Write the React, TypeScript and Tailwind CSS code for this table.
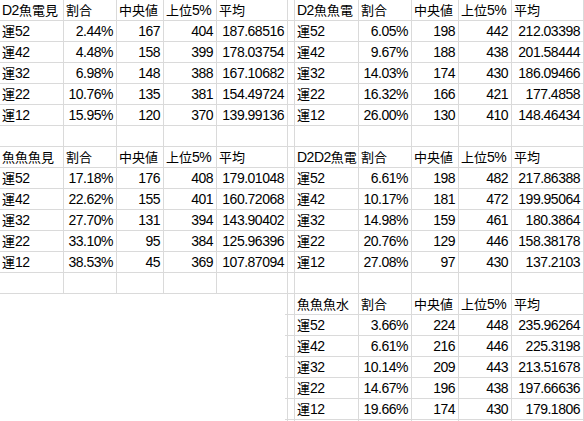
import React from "react";

const LEFT_W = ["w-[64px]", "w-[53px]", "w-[47px]", "w-[53px]", "w-[71px]"];
const RIGHT_W = ["w-[64px]", "w-[53px]", "w-[47px]", "w-[53px]", "w-[72px]"];

type Block = { kind: "header" | "data" | "empty" | "blank"; cells?: string[] };

const H = (name: string): Block => ({ kind: "header", cells: [name, "割合", "中央値", "上位5%", "平均"] });
const D = (...cells: string[]): Block => ({ kind: "data", cells });
const E: Block = { kind: "empty" };
const B: Block = { kind: "blank" };

const left: Block[] = [
  H("D2魚電見"),
  D("運52", "2.44%", "167", "404", "187.68516"),
  D("運42", "4.48%", "158", "399", "178.03754"),
  D("運32", "6.98%", "148", "388", "167.10682"),
  D("運22", "10.76%", "135", "381", "154.49724"),
  D("運12", "15.95%", "120", "370", "139.99136"),
  E,
  H("魚魚魚見"),
  D("運52", "17.18%", "176", "408", "179.01048"),
  D("運42", "22.62%", "155", "401", "160.72068"),
  D("運32", "27.70%", "131", "394", "143.90402"),
  D("運22", "33.10%", "95", "384", "125.96396"),
  D("運12", "38.53%", "45", "369", "107.87094"),
  E,
  B, B, B, B, B, B, B,
];

const right: Block[] = [
  H("D2魚魚電"),
  D("運52", "6.05%", "198", "442", "212.03398"),
  D("運42", "9.67%", "188", "438", "201.58444"),
  D("運32", "14.03%", "174", "430", "186.09466"),
  D("運22", "16.32%", "166", "421", "177.4858"),
  D("運12", "26.00%", "130", "410", "148.46434"),
  E,
  H("D2D2魚電"),
  D("運52", "6.61%", "198", "482", "217.86388"),
  D("運42", "10.17%", "181", "472", "199.95064"),
  D("運32", "14.98%", "159", "461", "180.3864"),
  D("運22", "20.76%", "129", "446", "158.38178"),
  D("運12", "27.08%", "97", "430", "137.2103"),
  E,
  H("魚魚魚水"),
  D("運52", "3.66%", "224", "448", "235.96264"),
  D("運42", "6.61%", "216", "446", "225.3198"),
  D("運32", "10.14%", "209", "443", "213.51678"),
  D("運22", "14.67%", "196", "438", "197.66636"),
  D("運12", "19.66%", "174", "430", "179.1806"),
  E,
];

function Text({ value }: { value: string }) {
  const parts = value.split(/([\u3000-\u9fff]+)/).filter((p) => p.length > 0);
  return (
    <>
      {parts.map((p, i) =>
        /[\u3000-\u9fff]/.test(p) ? (
          <span key={i} className="text-[13px] tracking-normal">
            {p}
          </span>
        ) : (
          <span key={i}>{p}</span>
        )
      )}
    </>
  );
}

function Cell({ w, text, right }: { w: string; text?: string; right?: boolean }) {
  return (
    <div
      className={`${w} h-full shrink-0 border-r border-b border-[#dadada] overflow-hidden whitespace-nowrap leading-[20px] ${
        right ? "text-right pr-[3px]" : "text-left pl-[2px]"
      }`}
    >
      {text ? <Text value={text} /> : null}
    </div>
  );
}

function Section({ block, widths }: { block: Block; widths: string[] }) {
  if (block.kind === "blank") {
    return (
      <>
        {widths.slice(0, 4).map((w, i) => (
          <div key={i} className={`${w} h-full shrink-0`} />
        ))}
        <div className={`${widths[4]} h-full shrink-0 border-r border-[#dadada] flex justify-end items-end`}>
          <div className="w-[2px] h-[1px] bg-[#dadada]" />
        </div>
      </>
    );
  }
  return (
    <>
      {widths.map((w, i) => {
        const text = block.cells ? block.cells[i] : undefined;
        const isRight = block.kind === "data" && i > 0;
        return <Cell key={i} w={w} text={text} right={isRight} />;
      })}
    </>
  );
}

export default function App() {
  return (
    <div
      className="w-[584px] h-[421px] overflow-hidden bg-white text-[14px] tracking-[-0.5px] text-black flex flex-col"
      style={{ fontFamily: '"Liberation Sans", Arial, "Noto Sans CJK JP", sans-serif' }}
    >
      {left.map((lb, r) => (
        <div key={r} className="flex h-[21px] shrink-0">
          <Section block={lb} widths={LEFT_W} />
          <Cell w="w-[7px]" />
          <Section block={right[r]} widths={RIGHT_W} />
        </div>
      ))}
    </div>
  );
}
